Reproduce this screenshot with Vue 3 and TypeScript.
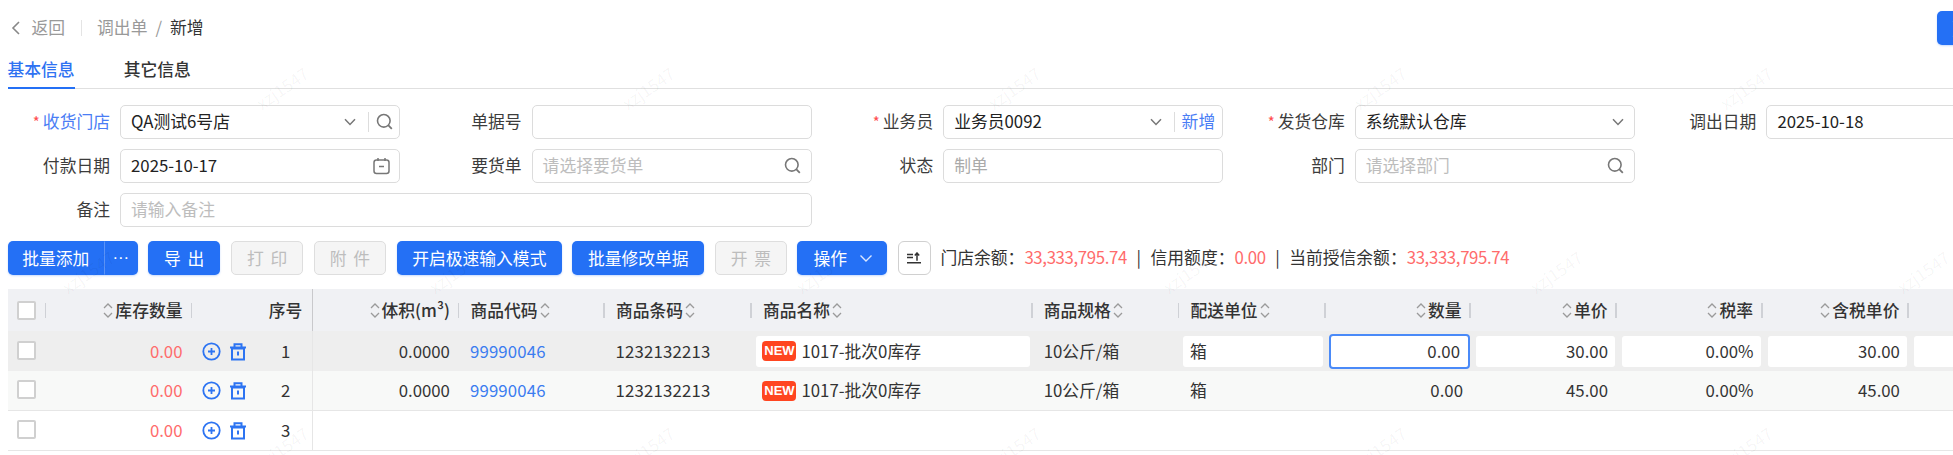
<script setup lang="ts">
interface HeadCol { label: string; sort?: 'before' | 'after'; align?: 'right' | 'center' | 'left'; sep?: boolean }
const heads: HeadCol[] = [
  { label: '', sep: true },
  { label: '库存数量', sort: 'before', align: 'right', sep: true },
  { label: '' },
  { label: '序号', align: 'center' },
  { label: '体积(m³)', sort: 'before', align: 'right', sep: true },
  { label: '商品代码', sort: 'after', sep: true },
  { label: '商品条码', sort: 'after', sep: true },
  { label: '商品名称', sort: 'after', sep: true },
  { label: '商品规格', sort: 'after', sep: true },
  { label: '配送单位', sort: 'after', sep: true },
  { label: '数量', sort: 'before', align: 'right', sep: true },
  { label: '单价', sort: 'before', align: 'right', sep: true },
  { label: '税率', sort: 'before', align: 'right', sep: true },
  { label: '含税单价', sort: 'before', align: 'right', sep: true },
  { label: '' },
]
const rows = [
  { seq: 1, price: '30.00', cls: 'active' },
  { seq: 2, price: '45.00', cls: 'plain' },
]
const marks: { x: number; y: number; faint?: boolean }[] = []
for (const y of [88, 448]) for (let k = 0; k < 5; k++) marks.push({ x: 282 + 366 * k, y })
for (let k = 0; k < 6; k++) marks.push({ x: 88 + 367 * k, y: 272 })
for (let k = 0; k < 6; k++) marks.push({ x: 100 + 367 * k, y: 205, faint: true })
for (let k = 0; k < 6; k++) marks.push({ x: 60 + 367 * k, y: 36, faint: true })
</script>

<template>
  <div class="page">
    <div class="top">
      <div class="crumbs">
        <svg class="back" width="10" height="16" viewBox="0 0 10 16"><path d="M8 2 2 8l6 6" fill="none" stroke="#888" stroke-width="1.6" /></svg>
        <span class="muted">返回</span>
        <i class="vsep"></i>
        <span class="muted">调出单</span>
        <span class="slash">/</span>
        <span class="current">新增</span>
      </div>
      <button class="btn primary topbtn">更新</button>
    </div>

    <div class="tabs">
      <span class="tab on">基本信息</span>
      <span class="tab">其它信息</span>
    </div>

    <div class="form">
      <div class="item">
        <label class="link"><em>*</em>收货门店</label>
        <div class="ctl">
          <span class="val">QA测试6号店</span>
          <svg class="chev" width="12" height="8" viewBox="0 0 12 8"><path d="M1 1.200 6 6.500l5-5.300" fill="none" stroke="#777" stroke-width="1.500" /></svg>
          <i class="ctl-sep"></i>
          <svg class="ico" width="17" height="17" viewBox="0 0 17 17"><circle cx="7.800" cy="7.800" r="6.300" fill="none" stroke="#777" stroke-width="1.600" /><path d="m12.200 12.200 3.600 3.600" stroke="#777" stroke-width="1.800" /></svg>
        </div>
      </div>
      <div class="item">
        <label>单据号</label>
        <div class="ctl"></div>
      </div>
      <div class="item">
        <label><em>*</em>业务员</label>
        <div class="ctl">
          <span class="val">业务员0092</span>
          <svg class="chev" width="12" height="8" viewBox="0 0 12 8"><path d="M1 1.200 6 6.500l5-5.300" fill="none" stroke="#777" stroke-width="1.500" /></svg>
          <i class="ctl-sep"></i>
          <span class="addon">新增</span>
        </div>
      </div>
      <div class="item">
        <label><em>*</em>发货仓库</label>
        <div class="ctl">
          <span class="val">系统默认仓库</span>
          <svg class="chev solo" width="12" height="8" viewBox="0 0 12 8"><path d="M1 1.200 6 6.500l5-5.300" fill="none" stroke="#777" stroke-width="1.500" /></svg>
        </div>
      </div>
      <div class="item">
        <label>调出日期</label>
        <div class="ctl"><span class="val">2025-10-18</span></div>
      </div>

      <div class="item">
        <label>付款日期</label>
        <div class="ctl">
          <span class="val">2025-10-17</span>
          <svg class="ico solo" width="17" height="18" viewBox="0 0 17 18"><rect x="1" y="3" width="15" height="13.500" rx="2.500" fill="none" stroke="#777" stroke-width="1.500" /><path d="M5 1v3M12 1v3M6 9.500h5" stroke="#777" stroke-width="1.500" fill="none" /></svg>
        </div>
      </div>
      <div class="item">
        <label>要货单</label>
        <div class="ctl">
          <span class="val ph">请选择要货单</span>
          <svg class="ico solo" width="17" height="17" viewBox="0 0 17 17"><circle cx="7.800" cy="7.800" r="6.300" fill="none" stroke="#777" stroke-width="1.600" /><path d="m12.200 12.200 3.600 3.600" stroke="#777" stroke-width="1.800" /></svg>
        </div>
      </div>
      <div class="item">
        <label>状态</label>
        <div class="ctl"><span class="val ph dark">制单</span></div>
      </div>
      <div class="item">
        <label>部门</label>
        <div class="ctl">
          <span class="val ph">请选择部门</span>
          <svg class="ico solo" width="17" height="17" viewBox="0 0 17 17"><circle cx="7.800" cy="7.800" r="6.300" fill="none" stroke="#777" stroke-width="1.600" /><path d="m12.200 12.200 3.600 3.600" stroke="#777" stroke-width="1.800" /></svg>
        </div>
      </div>
      <div class="item blank"></div>

      <div class="item wide">
        <label>备注</label>
        <div class="ctl"><span class="val ph">请输入备注</span></div>
      </div>
    </div>

    <div class="toolbar">
      <div class="split">
        <button class="btn primary main">批量添加</button>
        <button class="btn primary more">···</button>
      </div>
      <button class="btn primary spaced">导 出</button>
      <button class="btn off spaced">打 印</button>
      <button class="btn off spaced">附 件</button>
      <button class="btn primary">开启极速输入模式</button>
      <button class="btn primary">批量修改单据</button>
      <button class="btn off spaced">开 票</button>
      <button class="btn primary op">
        操作
        <svg width="14" height="14" viewBox="0 0 14 14"><path d="M1.500 4.500 7 10l5.500-5.500" fill="none" stroke="#dbe7ff" stroke-width="1.400" /></svg>
      </button>
      <button class="square">
        <svg width="14" height="12" viewBox="0 0 14 12"><path d="M0 2.500h6M0 5.500h6M0 10.700h14M10 8.700V1M7.800 3.500 10 1l2.200 2.500" fill="none" stroke="#333" stroke-width="1.500" /></svg>
      </button>
      <div class="balance">
        门店余额：<b>33,333,795.74</b><i>|</i>信用额度：<b>0.00</b><i>|</i>当前授信余额：<b>33,333,795.74</b>
      </div>
    </div>

    <div class="table">
      <div class="grid head">
        <div v-for="(h, i) in heads" :key="i" class="cell" :class="[h.align ?? 'left', { sep: h.sep, fixed: i === 3 }]">
          <span v-if="i === 0" class="check"></span>
          <svg v-if="h.sort === 'before'" class="sort" width="10" height="17" viewBox="0 0 10 17"><path d="M1 6 5 2l4 4M1 11l4 4 4-4" fill="none" stroke="#9a9a9a" stroke-width="1.300" /></svg>
          <span>{{ h.label }}</span>
          <svg v-if="h.sort === 'after'" class="sort" width="10" height="17" viewBox="0 0 10 17"><path d="M1 6 5 2l4 4M1 11l4 4 4-4" fill="none" stroke="#9a9a9a" stroke-width="1.300" /></svg>
        </div>
      </div>

      <div v-for="r in rows" :key="r.seq" class="grid body" :class="r.cls">
        <div class="cell left"><span class="check"></span></div>
        <div class="cell right red">0.00</div>
        <div class="cell acts">
          <svg width="19" height="19" viewBox="0 0 19 19"><circle cx="9.500" cy="9.500" r="8.200" fill="none" stroke="#2d74f2" stroke-width="1.800" /><path d="M6 9.500h7M9.500 6v7" stroke="#2d74f2" stroke-width="1.800" /></svg>
          <svg width="18" height="19" viewBox="0 0 18 19"><path d="M3 6.500h12v11H3zM1 5.500h16M5.500 5V2.300h7V5M9 9.500v4" fill="none" stroke="#2d74f2" stroke-width="2" /></svg>
        </div>
        <div class="cell center fixed">{{ r.seq }}</div>
        <div class="cell right">0.0000</div>
        <div class="cell left blue num">99990046</div>
        <div class="cell left num">1232132213</div>
        <div class="cell left box"><span class="pad"><span class="new">NEW</span>1017-批次0库存</span></div>
        <div class="cell left">10公斤/箱</div>
        <div class="cell left box unit"><span class="pad">箱</span></div>
        <div class="cell right box"><span class="pad focus">0.00</span></div>
        <div class="cell right box"><span class="pad">{{ r.price }}</span></div>
        <div class="cell right box"><span class="pad">0.00%</span></div>
        <div class="cell right box"><span class="pad">{{ r.price }}</span></div>
        <div class="cell right box"><span class="pad"></span></div>
      </div>

      <div class="grid body plain last">
        <div class="cell left"><span class="check"></span></div>
        <div class="cell right red">0.00</div>
        <div class="cell acts">
          <svg width="19" height="19" viewBox="0 0 19 19"><circle cx="9.500" cy="9.500" r="8.200" fill="none" stroke="#2d74f2" stroke-width="1.800" /><path d="M6 9.500h7M9.500 6v7" stroke="#2d74f2" stroke-width="1.800" /></svg>
          <svg width="18" height="19" viewBox="0 0 18 19"><path d="M3 6.500h12v11H3zM1 5.500h16M5.500 5V2.300h7V5M9 9.500v4" fill="none" stroke="#2d74f2" stroke-width="2" /></svg>
        </div>
        <div class="cell center fixed">3</div>
      </div>
    </div>

    <div class="marks" aria-hidden="true">
      <span v-for="(m, i) in marks" :key="i" class="mark" :class="{ faint: m.faint }" :style="{ left: m.x + 'px', top: m.y + 'px' }">xzj1547</span>
    </div>
  </div>
</template>

<style>
html, body { margin: 0; background: #fff; overflow: hidden; }
</style>

<style scoped>
.page {
  position: relative;
  width: 1953px;
  height: 455px;
  overflow: hidden;
  background: #fff;
  color: #333;
  font: 16.800px/1.400 "Noto Sans CJK SC", "Noto Sans", sans-serif;
  box-sizing: border-box;
  padding: 13px 0 0 7.500px;
}
* { box-sizing: border-box; }
.top { display: flex; justify-content: space-between; width: 1984px; height: 30px; align-items: center; }
.crumbs { display: flex; align-items: center; height: 30px; }
.back { margin: 0 11px 0 3px; }
.muted { color: #999; }
.vsep { width: 1px; height: 16px; background: #e4e4e4; margin: 0 15.500px; }
.slash { color: #999; margin: 0 8px; }
.current { color: #333; }
.topbtn { width: 55px; height: 30px; padding: 0 9px; text-align: left; }

.tabs { display: flex; gap: 49px; height: 46px; border-bottom: 1.500px solid #e0e0e0; margin-right: -8px; align-items: flex-end; }
.tab { font-weight: 500; color: #333; padding-top: 4px; height: 36px; line-height: 24px; position: relative; top: 1px; }
.tab.on { color: #2e72f2; border-bottom: 2.500px solid #2470f5; }

.form { display: grid; grid-template-columns: repeat(5, 400px); column-gap: 11.600px; row-gap: 10px; margin: 15.500px 0 0 -7.500px; width: 2060px; }
.item { display: flex; height: 34px; align-items: center; gap: 10px; }
.item.wide { grid-column: span 2; }
.item label { width: 110px; flex: none; text-align: right; color: #3c3c3c; white-space: nowrap; }
.item label.link { color: #4a7df5; }
.item label em { color: #ff4d4f; font-style: normal; margin-right: 3px; font-size: 15px; }
.ctl { flex: 1; height: 34px; border: 1px solid #dcdcdc; border-radius: 5px; display: flex; align-items: center; padding: 0 6px 0 10px; background: #fff; }
.val { flex: 1; color: #222; white-space: nowrap; }
.val.ph { color: #bdbdbd; }
.val.dark { color: #aaa; }
.ico { flex: none; }
.ico.solo { margin-right: 3.500px; }
.chev { flex: none; }
.chev.solo { margin-right: 4px; }
.ctl-sep { width: 1px; height: 20px; background: #ddd; margin: 0 7px 0 12px; }
.addon { color: #4a7df5; flex: none; margin-right: 1px; }

.toolbar { display: flex; align-items: center; gap: 10.300px; height: 34px; margin-top: 14.700px; white-space: nowrap; }
.btn { height: 34px; border-radius: 5px; border: 1px solid transparent; padding: 0 14.600px; font: inherit; line-height: 1; flex: none; white-space: nowrap; }
.primary { background: #2470f5; color: #fff; box-shadow: 0 1px 2px rgba(36, 112, 245, .25); }
.off { background: #f5f5f5; border-color: #dedede; color: #bdbdbd; }
.spaced { width: 72.600px; padding: 0; word-spacing: 3px; }
.split { display: flex; }
.main { width: 96.500px; padding: 0; border-radius: 5px 0 0 5px; }
.more { width: 33.600px; padding: 0; border-radius: 0 5px 5px 0; border-left: 1px solid #5b93f7; font-family: "Liberation Sans", sans-serif; }
.op { width: 90px; padding: 0 0 0 15px; display: flex; align-items: center; gap: 12px; }
.square { width: 33.500px; height: 34px; border: 1px solid #d0d0d0; border-radius: 6px; background: #fff; padding: 0; display: flex; align-items: center; justify-content: center; flex: none; }
.balance { color: #333; margin-left: -1px; font-size: 16.800px; }
.balance b { color: #ff6b6b; font-weight: 400; letter-spacing: -.35px; }
.balance i { font-style: normal; color: #333; margin: 0 9.500px; }

.table { margin-top: 14.300px; width: 2060px; }
.grid { display: grid; grid-template-columns: 38.500px 146px 67.500px 53.100px 146.800px 145.600px 147px 280.700px 146.800px 146.200px 145.300px 146px 145.600px 146.400px 146px; }
.head { height: 42px; background: #f0f1f4; font-weight: 500; color: #333; }
.body { height: 40px; }
.active { background: #eee; }
.plain { background: #f8f9f8; border-bottom: 1px solid #e6e6e6; }
.last { background: #fff; }
.cell { display: flex; align-items: center; padding: 0 9.500px 0 11px; position: relative; white-space: nowrap; min-width: 0; }
.cell.right { justify-content: flex-end; }
.cell.center { justify-content: center; padding: 0; }
.cell.sep::after { content: ""; position: absolute; right: 0; top: 14px; width: 1.500px; height: 15px; background: #cfd1d6; }
.cell.fixed { border-right: 1px solid #e6e6e6; }
.head .cell.fixed { border-right-color: #c9c9cc; }
.head .cell:first-child { padding-left: 9.500px; }
.body .cell:first-child { padding-left: 9.500px; padding-bottom: 2px; }
.check { display: block; width: 19px; height: 19px; border: 2px solid #d0d0d0; border-radius: 2px; background: #fff; }
.sort { flex: none; margin: 0 2px; }
.red { color: #ff6b6b; }
.blue { color: #3b7cf0; }
.num { letter-spacing: .18px; padding-left: 10.500px; }
.acts { padding: 0 0 0 9.500px; gap: 8.500px; }
.new { display: inline-block; width: 34px; height: 20px; margin-right: 5px; background: #ff4520; border-radius: 4px; color: #fff; font: 700 13px/20px "Liberation Sans", sans-serif; text-align: center; vertical-align: 2px; }
.box { padding: 0 2px 0 5.500px; }
.box.left { padding: 0 3px 0 4.500px; }
.box.unit { padding-left: 3.500px; }
.box.unit .pad { padding-left: 7px; }
.pad { flex: 1; display: flex; align-items: center; height: 31px; padding: 0 6px; white-space: nowrap; }
.right .pad { justify-content: flex-end; padding-right: 7px; }
.active .pad { background: #fff; border-radius: 3px; }
.active .pad.focus { height: 35px; margin: 0 -1px 0 -2.500px; border: 2px solid #4a8af8; border-radius: 4px; padding: 0 8px; }
.plain .pad.focus { padding-right: 6px; }

.marks { position: absolute; inset: 0; pointer-events: none; }
.mark { position: absolute; color: rgba(0, 0, 0, .045); font-size: 17px; transform: translate(-50%, -50%) rotate(-35deg); white-space: nowrap; }
.mark.faint { color: rgba(0, 0, 0, .022); }
</style>
